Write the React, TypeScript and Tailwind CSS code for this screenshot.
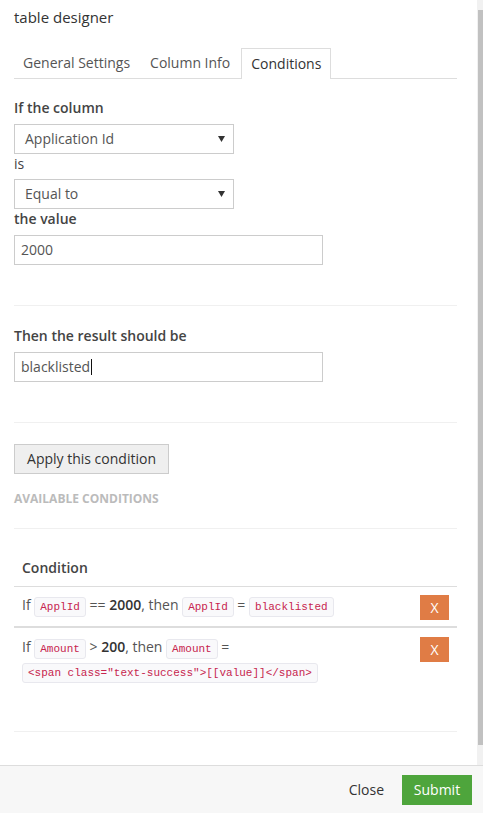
import React from 'react';

const Code: React.FC<{ children: React.ReactNode }> = ({ children }) => (
  <code className="inline-block rounded-[3px] border border-[#e8e8ee] bg-[#f9f9fb] px-[5px] py-0 font-['Liberation_Mono',monospace] text-[11px] leading-[18px] text-[#c7254e]">
    {children}
  </code>
);

const Select: React.FC<{ value: string }> = ({ value }) => (
  <div className="flex h-[30px] w-[220px] items-center justify-between border border-[#ccc] bg-white pl-[10px] pr-[8px] text-[14px] text-[#555]">
    <span>{value}</span>
    <svg width="7" height="6" viewBox="0 0 7 6">
      <path d="M0 0h7L3.5 6z" fill="#333" />
    </svg>
  </div>
);

const RemoveButton: React.FC = () => (
  <div className="ml-auto flex h-[25px] w-[29px] items-center justify-center bg-[#e07c45] text-[14px] text-white">X</div>
);

const App: React.FC = () => {
  return (
    <div className="relative h-[813px] w-[483px] overflow-hidden bg-white font-['Open_Sans',sans-serif] text-[14px] leading-[20px] text-[#333]">
      {/* scrollable body */}
      <div className="h-[765px] pl-[14px] pr-[26px] pt-[7px]">
        <div className="text-[15px] text-[#333]">table designer</div>

        {/* Tabs */}
        <div className="mt-[21px] flex border-b border-[#ddd]">
          <div className="px-[9px] py-[5px] text-[#555]">General Settings</div>
          <div className="ml-[2px] px-[9px] py-[5px] text-[#555]">Column Info</div>
          <div className="relative -mb-px ml-[2px] border border-b-0 border-[#ddd] bg-white px-[9px] py-[5px] text-[#333]">
            Conditions
            <div className="absolute -bottom-px left-0 right-0 h-px bg-white" />
          </div>
        </div>

        {/* Tab content */}
        <div className="pt-[19px]">
          <div className="mb-[6px] font-semibold text-[#444]">If the column</div>
          <Select value="Application Id" />
          <div className="mb-[5px] text-[#444]">is</div>
          <Select value="Equal to" />
          <div className="mb-[6px] font-semibold text-[#444]">the value</div>
          <div className="flex h-[30px] w-[309px] items-center border border-[#ccc] px-[6px] text-[#555]">2000</div>

          <hr className="mb-[20px] mt-[40px] border-t border-[#f0f0f0]" />

          <div className="mb-[6px] font-semibold text-[#444]">Then the result should be</div>
          <div className="flex h-[30px] w-[309px] items-center border border-[#ccc] px-[6px] text-[#555]">
            blacklisted
            <span className="ml-px inline-block h-[16px] w-px bg-[#111]" />
          </div>

          <hr className="mb-[21px] mt-[40px] border-t border-[#f0f0f0]" />

          <button className="h-[30px] w-[155px] border border-[#ccc] bg-[#efefef] text-[14px] text-[#333]">
            Apply this condition
          </button>

          <div className="mt-[17px] text-[12px] font-bold uppercase leading-[16px] text-[#bbb]">
            Available conditions
          </div>

          <hr className="mb-[21px] mt-[21px] border-t border-[#f0f0f0]" />

          {/* Conditions table */}
          <table className="w-full border-collapse">
            <thead>
              <tr className="border-b border-[#ddd]">
                <th className="px-[8px] py-[8px] text-left font-semibold text-[#444]">Condition</th>
                <th />
              </tr>
            </thead>
            <tbody>
              <tr className="border-b-2 border-[#ddd]">
                <td className="px-[8px] pb-[9px] pt-[8px] align-top text-[#555]">
                  If <Code>ApplId</Code> == <b className="font-semibold text-[#333]">2000</b>, then <Code>ApplId</Code> ={' '}
                  <Code>blacklisted</Code>
                </td>
                <td className="w-[50px] pr-[8px] pt-[8px] align-top">
                  <RemoveButton />
                </td>
              </tr>
              <tr>
                <td className="px-[8px] pb-[8px] pt-[7px] align-top leading-[23px] text-[#555]">
                  If <Code>Amount</Code> &gt; <b className="font-semibold text-[#333]">200</b>, then <Code>Amount</Code> =
                  <br />
                  <Code>{'<span class="text-success">[[value]]</span>'}</Code>
                </td>
                <td className="pr-[8px] pt-[9px] align-top">
                  <RemoveButton />
                </td>
              </tr>
            </tbody>
          </table>

          <hr className="mt-[40px] border-t border-[#f0f0f0]" />
        </div>
      </div>

      {/* Footer */}
      <div className="flex h-[48px] items-center justify-end gap-[18px] border-t border-[#ddd] bg-[#f7f7f7] pr-[11px]">
        <span className="text-[#333]">Close</span>
        <button className="h-[30px] w-[70px] bg-[#4ea53c] text-white">Submit</button>
      </div>

      {/* scrollbar */}
      <div className="absolute right-0 top-0 h-[765px] w-[6px] bg-[#f1f1f1]">
        <div className="absolute left-[1px] right-0 top-[10px] h-[735px] bg-[#c1c1c1]" />
      </div>
    </div>
  );
};

export default App;
